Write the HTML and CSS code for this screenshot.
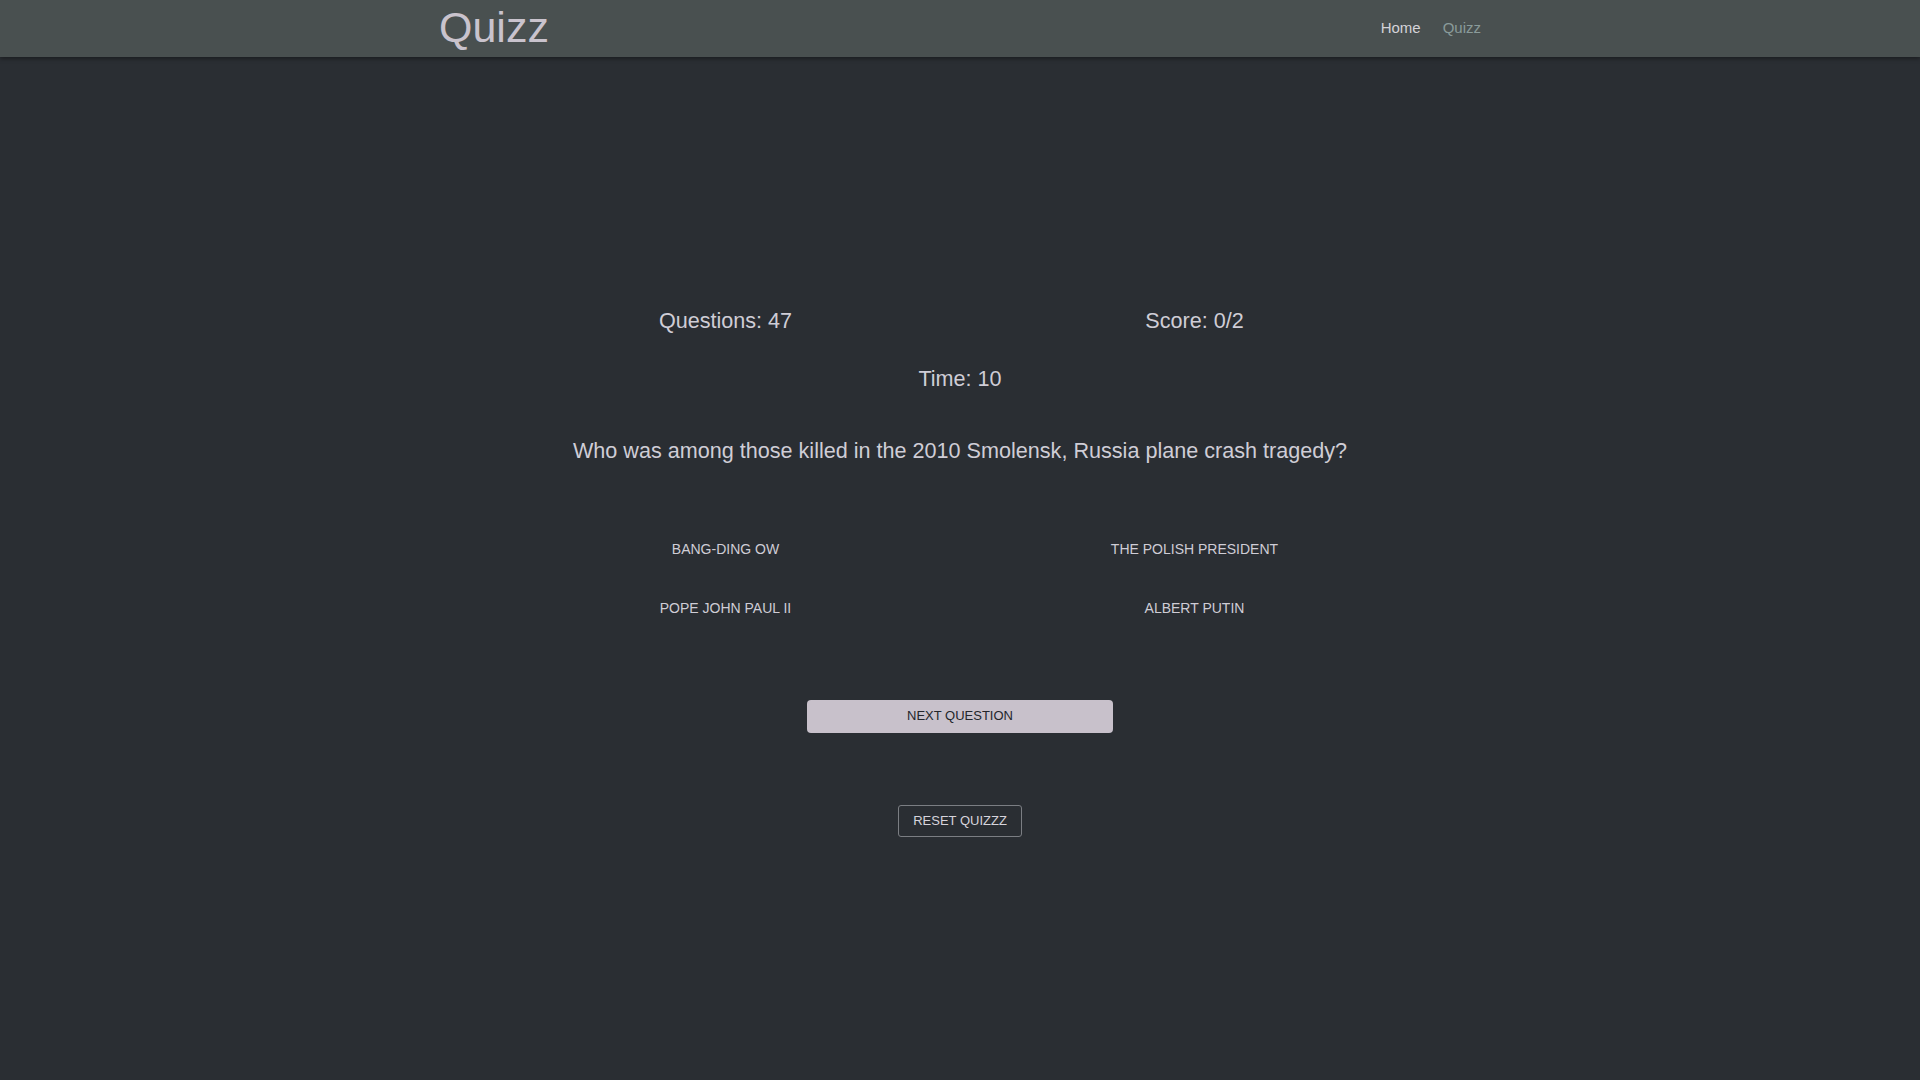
FILE: index.html
```html
<!DOCTYPE html>
<html lang="en">
<head>
<meta charset="utf-8">
<title>Quizz</title>
<link rel="stylesheet" href="styles.css">
</head>
<body>
<header class="topbar">
  <div class="topbar-inner">
    <a class="brand" href="#">Quizz</a>
    <nav class="nav">
      <a class="nav-link active" href="#">Home</a>
      <a class="nav-link" href="#">Quizz</a>
    </nav>
  </div>
</header>
<main class="quiz">
  <div class="stats">
    <div class="stat">Questions: 47</div>
    <div class="stat">Score: 0/2</div>
  </div>
  <div class="time">Time: 10</div>
  <div class="question">Who was among those killed in the 2010 Smolensk, Russia plane crash tragedy?</div>
  <div class="answers">
    <button class="answer">BANG-DING OW</button>
    <button class="answer">THE POLISH PRESIDENT</button>
    <button class="answer">POPE JOHN PAUL II</button>
    <button class="answer">ALBERT PUTIN</button>
  </div>
  <button class="next">NEXT QUESTION</button>
  <button class="reset">RESET QUIZZZ</button>
</main>
</body>
</html>
```
FILE: styles.css
```css
html, body {
  margin: 0;
  padding: 0;
}
body {
  background: #2a2e33;
  color: #cfcdd6;
  font-family: "Liberation Sans", Arial, sans-serif;
  min-height: 1080px;
}
.topbar {
  background: #495050;
  height: 57px;
  box-shadow: 0 2px 4px rgba(0,0,0,0.35);
  position: relative;
}
.topbar-inner {
  width: 1040px;
  margin: 0 auto;
  height: 100%;
  display: flex;
  align-items: center;
  justify-content: space-between;
}
.brand {
  color: #c9c3cd;
  text-decoration: none;
  font-size: 43px;
  line-height: 1;
  margin-top: -2px;
  margin-left: -1px;
}
.nav {
  display: flex;
  gap: 22px;
  margin-top: -2px;
  margin-right: -1px;
}
.nav-link {
  font-size: 15px;
  text-decoration: none;
  color: #8a9b9a;
}
.nav-link.active {
  color: #d4d3d8;
}
.quiz {
  display: flex;
  flex-direction: column;
  align-items: center;
  padding-top: 251px;
}
.stats {
  width: 938px;
  display: grid;
  grid-template-columns: 1fr 1fr;
}
.stat {
  text-align: center;
  font-size: 21.6px;
  line-height: 26px;
}
.time {
  margin-top: 32px;
  font-size: 21.6px;
  line-height: 26px;
}
.question {
  margin-top: 46px;
  font-size: 21.6px;
  line-height: 26px;
}
.answers {
  margin-top: 77px;
  width: 938px;
  display: grid;
  grid-template-columns: 1fr 1fr;
  row-gap: 42px;
}
.answer {
  justify-self: center;
  background: transparent;
  border: none;
  padding: 0;
  color: #cfcdd6;
  font-family: "Liberation Sans", Arial, sans-serif;
  font-size: 14px;
  line-height: 17px;
  cursor: pointer;
}
.next {
  margin-top: 83px;
  width: 306px;
  height: 33px;
  padding: 0 0 2px;
  background: #c8c1cb;
  color: #23262b;
  border: none;
  border-radius: 4px;
  font-family: "Liberation Sans", Arial, sans-serif;
  font-size: 13px;
  cursor: pointer;
}
.reset {
  margin-top: 72px;
  width: 124px;
  height: 32px;
  padding: 0 0 2px;
  background: transparent;
  color: #d6d4dc;
  border: 1px solid #7b7e83;
  border-radius: 3px;
  font-family: "Liberation Sans", Arial, sans-serif;
  font-size: 13px;
  cursor: pointer;
}
```
